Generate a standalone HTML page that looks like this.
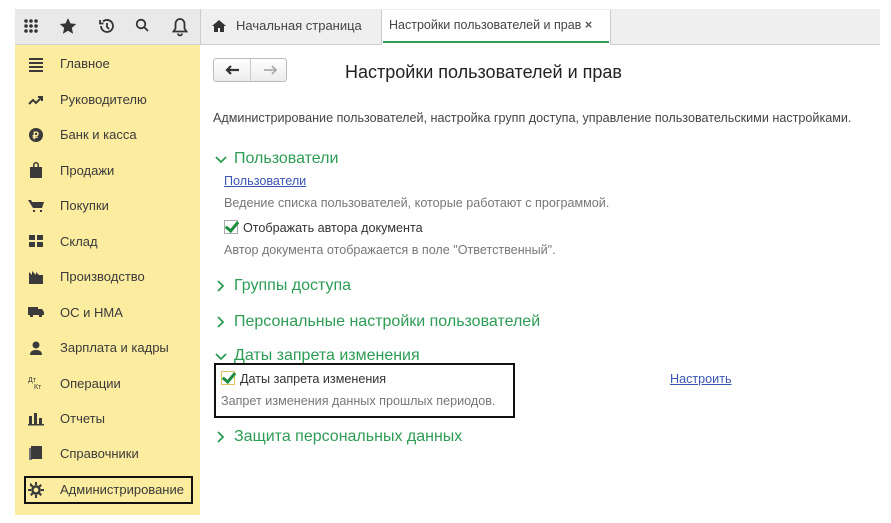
<!DOCTYPE html>
<html><head><meta charset="utf-8"><style>
*{margin:0;padding:0;box-sizing:border-box}
body{width:891px;height:523px;background:#fff;font-family:"Liberation Sans",sans-serif;position:relative;overflow:hidden;color:#333}
.a{position:absolute;white-space:nowrap}
#tb{left:15px;top:9px;width:185px;height:36px;background:#e9e9e9;border-bottom:1px solid #d0d0d0}
#tabs{left:200px;top:9px;width:680px;height:36px;background:#efefef;border-bottom:1px solid #cfcfcf;border-left:1px solid #ccc}
#sb{left:15px;top:45px;width:185px;height:470px;background:#fcec9f}
.it{position:absolute;left:60px;font-size:13px;color:#3a3a3a}
.si{position:absolute;left:28px;width:16px;height:16px}
.g{color:#2d9c55;font-size:16px}
.gr{color:#777;font-size:12.6px}
.cb{display:inline-block;width:14px;height:14px;border:1px solid #aaa;background:#fff;vertical-align:-2px;margin-right:5px;position:relative}
.cb:after{content:"";position:absolute;left:3px;top:-2px;width:5px;height:10px;border:solid #1f8d3e;border-width:0 3px 3px 0;transform:rotate(40deg)}
.ch{position:absolute;left:215px}
</style></head><body>
<div class="a" id="tb"></div>
<svg class="a" style="left:22px;top:17px" width="170" height="20" viewBox="0 0 170 20">
<g fill="#333"><circle cx="4" cy="4" r="1.8"/><circle cx="9" cy="4" r="1.8"/><circle cx="14" cy="4" r="1.8"/><circle cx="4" cy="9" r="1.8"/><circle cx="9" cy="9" r="1.8"/><circle cx="14" cy="9" r="1.8"/><circle cx="4" cy="14" r="1.8"/><circle cx="9" cy="14" r="1.8"/><circle cx="14" cy="14" r="1.8"/>
<path d="M46 1l2.4 5.4 5.8.6-4.4 3.9 1.3 5.8-5.1-3-5.1 3 1.3-5.8-4.4-3.9 5.8-.6z"/></g>
<g fill="none" stroke="#333" stroke-width="1.8"><path d="M79 9a6 6 0 1 0 2-4.5"/><path d="M78 3v3.5h3.5"/><path d="M85 6v4l2 2"/>
<circle cx="119" cy="7" r="4.3"/><path d="M122 10l4 4"/>
<path d="M158 2c-3 0-4.5 2.5-4.5 5v4.5l-2 3h13l-2-3V7c0-2.5-1.5-5-4.5-5z"/><path d="M156 16.5a2 2 0 0 0 4 0"/></g>
</svg>
<div class="a" id="tabs"></div>
<div class="a" style="left:381px;top:10px;width:230px;height:35px;background:#fff;border-left:1px solid #ccc;border-right:1px solid #ccc"></div>
<div class="a" style="left:383px;top:41px;width:226px;height:2px;background:#2d9c55"></div>
<svg class="a" style="left:212px;top:20px" width="14" height="12" viewBox="0 0 14 12"><path d="M7 0L0 6h2v6h4V8h2v4h4V6h2z" fill="#333"/></svg>
<div class="a" style="left:236px;top:18px;font-size:13px;color:#444">Начальная страница</div>
<div class="a" style="left:389px;top:18px;font-size:12.5px;color:#444">Настройки пользователей и прав <b style="color:#555">×</b></div>
<div class="a" id="sb"></div>
<svg class="si" style="top:57px" viewBox="0 0 16 16" fill="#3a3a3a"><rect x="1" y="1" width="14" height="2"/><rect x="1" y="5" width="14" height="2"/><rect x="1" y="9" width="14" height="2"/><rect x="1" y="13" width="14" height="2"/></svg>
<svg class="si" style="top:92px" viewBox="0 0 16 16" fill="none" stroke="#3a3a3a" stroke-width="2"><path d="M1 12l4-4 3 3 5-5"/><path d="M10 5h4v4"/></svg>
<svg class="si" style="top:127px" viewBox="0 0 16 16"><circle cx="8" cy="8" r="7" fill="#3a3a3a"/><text x="4.5" y="12" font-size="10" fill="#fcec9f" font-family="Liberation Sans" font-weight="bold">₽</text></svg>
<svg class="si" style="top:162px" viewBox="0 0 16 16" fill="#3a3a3a"><path d="M2 5h12v11H2z M5 5V3a3 3 0 0 1 6 0v2H9.5V3a1.5 1.5 0 0 0-3 0v2z"/></svg>
<svg class="si" style="top:198px" viewBox="0 0 16 16" fill="#3a3a3a"><path d="M0 2h3l1 2h12l-2 6H5zM5 12h2v2H5zM12 12h2v2h-2z"/></svg>
<svg class="si" style="top:233px" viewBox="0 0 16 16" fill="#3a3a3a"><path d="M1 2h6v5H1zM9 2h6v5H9zM1 9h6v5H1zM9 9h6v5H9z"/></svg>
<svg class="si" style="top:269px" viewBox="0 0 16 16" fill="#3a3a3a"><path d="M1 15V3l3 3V2l4 4V3l3 3h4v9z"/></svg>
<svg class="si" style="top:304px" viewBox="0 0 16 16" fill="#3a3a3a"><path d="M0 3h10v8H0zM10 5h4l2 3v3h-6zM2 11h3v2H2zM11 11h3v2h-3z"/></svg>
<svg class="si" style="top:340px" viewBox="0 0 16 16" fill="#3a3a3a"><circle cx="8" cy="5" r="3.5"/><path d="M2 15c0-4 3-5 6-5s6 1 6 5z"/></svg>
<svg class="si" style="top:375px" viewBox="0 0 16 16" fill="#3a3a3a"><text x="0" y="7" font-size="7" font-family="Liberation Sans">Дт</text><text x="6" y="14" font-size="7" font-family="Liberation Sans">Кт</text></svg>
<svg class="si" style="top:410px" viewBox="0 0 16 16" fill="#3a3a3a"><path d="M1 14V6h3v8zM6 14V3h3v11zM11 14V8h3v6zM0 14h16v1.5H0z"/></svg>
<svg class="si" style="top:445px" viewBox="0 0 16 16"><path d="M1 3h3v12H1z" fill="#777"/><path d="M3 1h11v13H3z" fill="#3a3a3a"/></svg>
<svg class="si" style="top:482px" viewBox="0 0 16 16" fill="#3a3a3a"><circle cx="8" cy="8" r="3.6" fill="none" stroke="#3a3a3a" stroke-width="2.5"/><path d="M7 0h2v3H7zM7 13h2v3H7zM0 7h3v2H0zM13 7h3v2h-3zM2 1l2 1-0 2-2 0zM2 3.5L3.5 2 5.5 4 4 5.5zM10.5 12L12 10.5 14 12.5 12.5 14zM2 12.5L4 10.5 5.5 12 3.5 14zM10.5 4L12.5 2 14 3.5 12 5.5z"/></svg>
<div class="it" style="top:56px">Главное</div>
<div class="it" style="top:92px">Руководителю</div>
<div class="it" style="top:127px">Банк и касса</div>
<div class="it" style="top:163px">Продажи</div>
<div class="it" style="top:198px">Покупки</div>
<div class="it" style="top:234px">Склад</div>
<div class="it" style="top:269px">Производство</div>
<div class="it" style="top:305px">ОС и НМА</div>
<div class="it" style="top:340px">Зарплата и кадры</div>
<div class="it" style="top:376px">Операции</div>
<div class="it" style="top:411px">Отчеты</div>
<div class="it" style="top:446px">Справочники</div>
<div class="it" style="top:482px">Администрирование</div>
<div class="a" style="left:24px;top:476px;width:169px;height:28px;border:2px solid #111"></div>

<div class="a" style="left:213px;top:58px;width:74px;height:24px;border:1px solid #bbb;border-radius:3px;background:linear-gradient(#fff,#ececec)"></div>
<div class="a" style="left:250px;top:59px;width:1px;height:22px;background:#ccc"></div>
<svg class="a" style="left:224px;top:64px" width="54" height="12" viewBox="0 0 54 12"><path d="M15 6H3M7 2L3 6l4 4" fill="none" stroke="#333" stroke-width="2.2"/><path d="M40 6h12M48 2l4 4-4 4" fill="none" stroke="#aaa" stroke-width="1.8"/></svg>
<div class="a" style="left:345px;top:62px;font-size:18px;color:#222">Настройки пользователей и прав</div>
<div class="a" style="left:213px;top:111px;font-size:12.6px;color:#444">Администрирование пользователей, настройка групп доступа, управление пользовательскими настройками.</div>
<svg width="0" height="0" style="position:absolute"><defs>
<path id="dn" d="M1 4l5 5 5-5" fill="none" stroke="#2d9c55" stroke-width="1.8"/>
<path id="rt" d="M3 1l5 5-5 5" fill="none" stroke="#2d9c55" stroke-width="1.8"/></defs></svg>
<svg class="ch" style="top:153px" width="12" height="12"><use href="#dn"/></svg>
<div class="a g" style="left:234px;top:150px">Пользователи</div>
<div class="a" style="left:224px;top:174px;font-size:12.6px;color:#3a55b5;text-decoration:underline">Пользователи</div>
<div class="a gr" style="left:224px;top:196px">Ведение списка пользователей, которые работают с программой.</div>
<div class="a" style="left:224px;top:220px;font-size:12.6px;color:#333"><span class="cb"></span>Отображать автора документа</div>
<div class="a gr" style="left:224px;top:243px">Автор документа отображается в поле "Ответственный".</div>
<svg class="ch" style="top:280px" width="12" height="12"><use href="#rt"/></svg>
<div class="a g" style="left:234px;top:277px">Группы доступа</div>
<svg class="ch" style="top:316px" width="12" height="12"><use href="#rt"/></svg>
<div class="a g" style="left:234px;top:313px">Персональные настройки пользователей</div>
<svg class="ch" style="top:350px" width="12" height="12"><use href="#dn"/></svg>
<div class="a g" style="left:234px;top:347px">Даты запрета изменения</div>
<div class="a" style="left:221px;top:371px;font-size:12.6px;color:#333"><span class="cb" style="border-color:#e0c060"></span>Даты запрета изменения</div>
<div class="a" style="left:670px;top:372px;font-size:12.6px;color:#3a55b5;text-decoration:underline">Настроить</div>
<div class="a gr" style="left:221px;top:394px">Запрет изменения данных прошлых периодов.</div>
<div class="a" style="left:214px;top:363px;width:301px;height:55px;border:2px solid #111"></div>
<svg class="ch" style="top:431px" width="12" height="12"><use href="#rt"/></svg>
<div class="a g" style="left:234px;top:428px">Защита персональных данных</div>
</body></html>
